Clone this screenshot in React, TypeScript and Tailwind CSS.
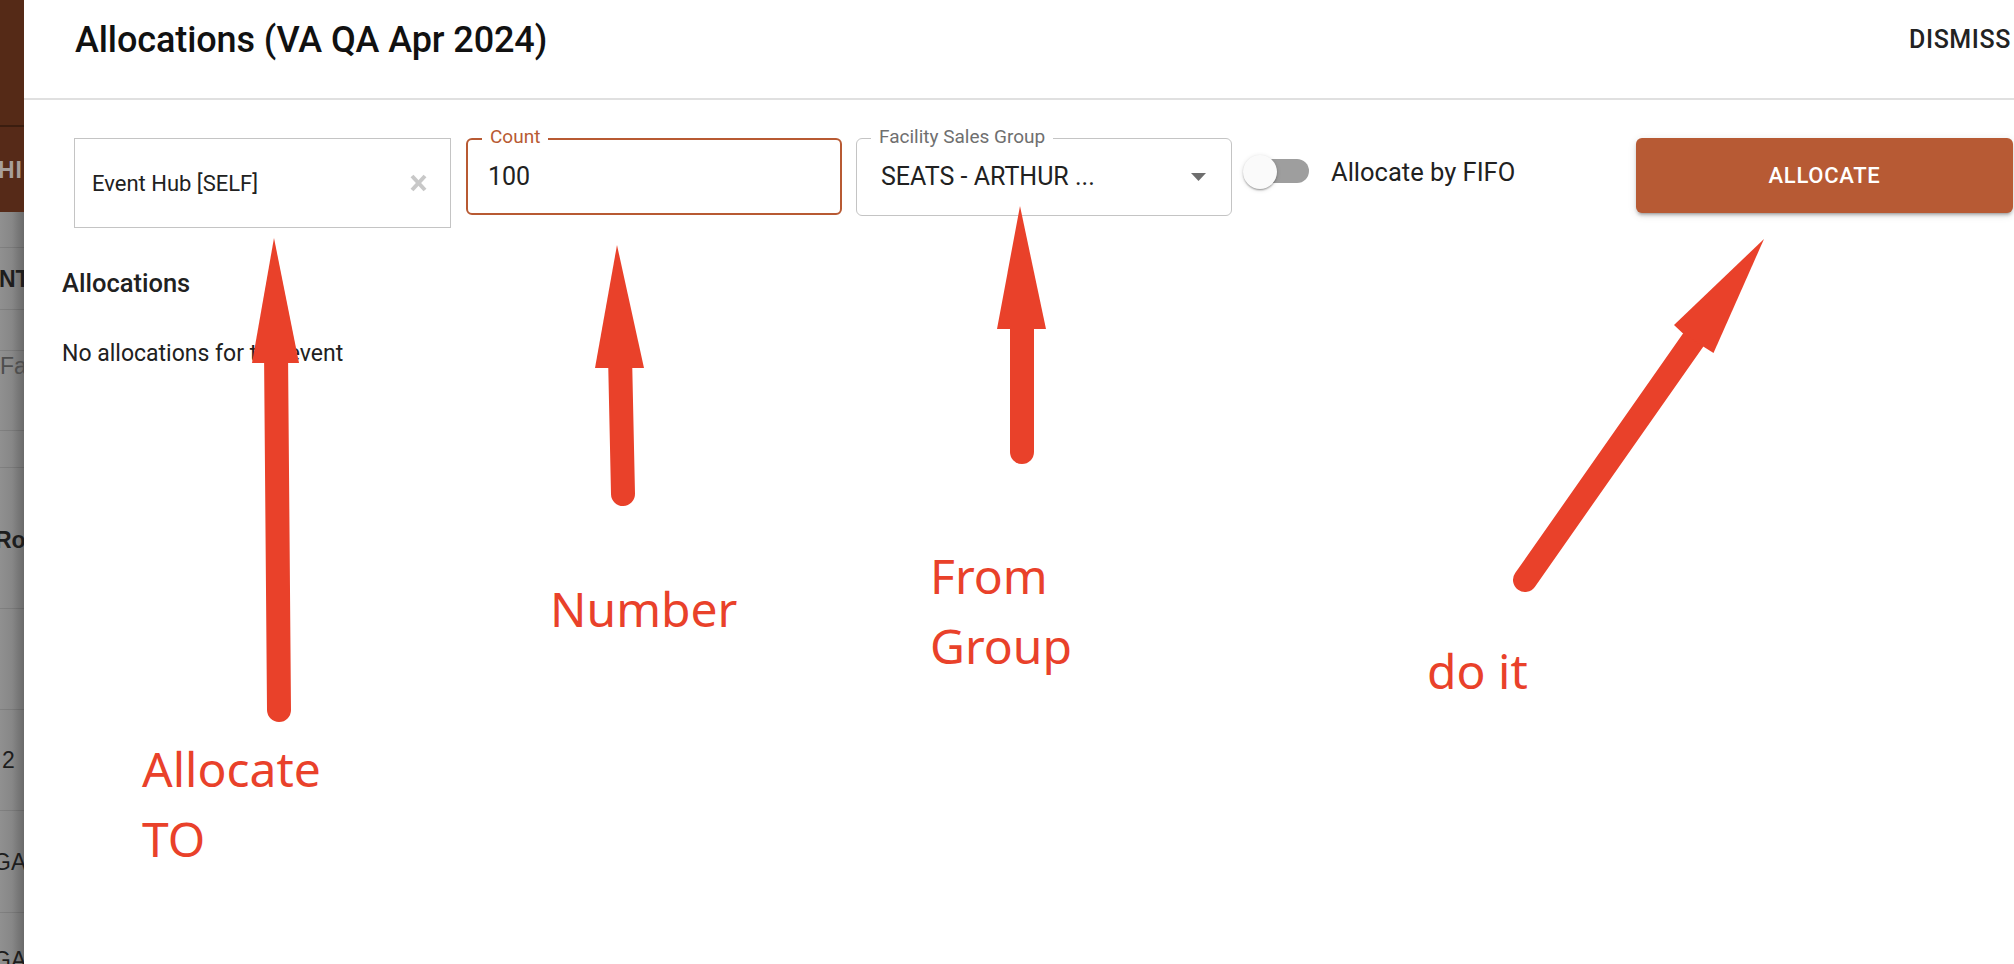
import React from "react";

function BgStrip() {
  const line = <div className="h-px shrink-0 bg-black/10" />;
  return (
    <div className="flex w-[24px] shrink-0 flex-col overflow-hidden font-['Liberation_Sans',sans-serif] text-[23px] leading-[26px]">
      <div className="h-[125px] shrink-0 bg-[#552a17]" />
      <div className="h-[2px] shrink-0 bg-[#3b1d0f]" />
      <div className="flex h-[85px] shrink-0 items-center bg-[#562a18] font-bold tracking-[1px] text-[#a79e99]">
        <span className="-ml-[2px] whitespace-nowrap">HI</span>
      </div>
      <div className="flex flex-1 flex-col bg-linear-to-r from-[#909090] via-[#878787] to-[#6a6a6a] text-[#1d1d1d]">
        <div className="h-[35px] shrink-0" />
        {line}
        <div className="flex h-[61px] shrink-0 items-center font-bold">
          <span className="-ml-[1px] whitespace-nowrap">NT</span>
        </div>
        {line}
        <div className="h-[40px] shrink-0" />
        {line}
        <div className="h-[79px] shrink-0 pt-[2px] text-[#4e4e4e]">
          <span className="whitespace-nowrap">Fa</span>
        </div>
        {line}
        <div className="h-[36px] shrink-0" />
        {line}
        <div className="flex h-[140px] shrink-0 items-center pt-[4px] font-bold">
          <span className="-ml-[5px] whitespace-nowrap">Row</span>
        </div>
        {line}
        <div className="h-[100px] shrink-0" />
        {line}
        <div className="flex h-[100px] shrink-0 items-center">
          <span className="ml-[2px] whitespace-nowrap">2</span>
        </div>
        {line}
        <div className="flex h-[101px] shrink-0 items-center">
          <span className="-ml-[7px] whitespace-nowrap">GA</span>
        </div>
        {line}
        <div className="flex-1 pt-[34px]">
          <span className="-ml-[7px] whitespace-nowrap">GA</span>
        </div>
      </div>
    </div>
  );
}

function Annotations() {
  const red = "#e9412a";
  return (
    <>
      <svg
        className="pointer-events-none absolute left-0 top-0"
        width={2014}
        height={964}
        viewBox="0 0 2014 964"
      >
        {/* Allocate TO */}
        <line x1={276} y1={350} x2={279} y2={710} stroke={red} strokeWidth={24} strokeLinecap="round" />
        <polygon points="274,238 299,363 252,363" fill={red} />
        {/* Number */}
        <line x1={620} y1={355} x2={623} y2={494} stroke={red} strokeWidth={24} strokeLinecap="round" />
        <polygon points="617,245 644,368 595,368" fill={red} />
        {/* From Group */}
        <line x1={1022} y1={315} x2={1022} y2={452} stroke={red} strokeWidth={24} strokeLinecap="round" />
        <polygon points="1020,206 1046,329 997,329" fill={red} />
        {/* do it */}
        <line x1={1525} y1={580} x2={1696} y2={336} stroke={red} strokeWidth={24} strokeLinecap="round" />
        <polygon points="1764,239 1713.5,353 1704,347 1682.5,333 1674,325" fill={red} />
      </svg>
      <div className="pointer-events-none absolute left-[142px] top-[734px] font-['Noto_Sans',sans-serif] text-[48px] leading-[70px] text-[#e9412a]">
        <div>Allocate</div>
        <div>TO</div>
      </div>
      <div className="pointer-events-none absolute left-[550px] top-[574px] font-['Noto_Sans',sans-serif] text-[48px] leading-[70px] text-[#e9412a]">
        Number
      </div>
      <div className="pointer-events-none absolute left-[930px] top-[541px] font-['Noto_Sans',sans-serif] text-[48px] leading-[70px] text-[#e9412a]">
        <div>From</div>
        <div>Group</div>
      </div>
      <div className="pointer-events-none absolute left-[1427px] top-[636px] font-['Noto_Sans',sans-serif] text-[48px] leading-[70px] text-[#e9412a]">
        do it
      </div>
    </>
  );
}

export default function App() {
  return (
    <div className="relative flex h-[964px] w-[2014px] overflow-hidden bg-white font-['Roboto',sans-serif]">
      <BgStrip />
      <div className="flex min-w-0 flex-1 flex-col bg-white">
        {/* header */}
        <div className="flex h-[98px] shrink-0 items-start pl-[51px] pr-[3px] pt-[19px]">
          <div className="text-[36px] font-medium leading-[42px] tracking-[-0.1px] text-[#111111]">
            Allocations (VA QA Apr 2024)
          </div>
          <div className="ml-auto mt-[6px] shrink-0 text-[25px] font-medium leading-[29px] tracking-[0.6px] text-[#222222]">
            DISMISS
          </div>
        </div>
        <div className="h-[2px] shrink-0 bg-[#e0e0e0]" />

        {/* body */}
        <div className="flex flex-col pl-[38px] pt-[38px]">
          <div className="ml-[12px] mr-[1px] flex items-start">
            {/* Allocate to */}
            <div className="flex h-[90px] w-[377px] shrink-0 items-center justify-between border border-[#c4c4c4] pl-[17px] pr-[23px] text-[22px] text-[#212121]">
              <span>Event Hub [SELF]</span>
              <svg width={17} height={18} viewBox="0 0 17 18">
                <line x1={2} y1={2} x2={15} y2={16} stroke="#c8c8c8" strokeWidth={4} />
                <line x1={15} y1={2} x2={2} y2={16} stroke="#c8c8c8" strokeWidth={4} />
              </svg>
            </div>

            {/* Count */}
            <div className="relative ml-[15px] flex h-[77px] w-[376px] shrink-0 items-center rounded-[6px] border-2 border-[#b85a33] pl-[20px] text-[25px] text-[#212121]">
              <span className="absolute left-[14px] top-[-14px] bg-white px-[8px] text-[19px] leading-[22px] text-[#b85a33]">
                Count
              </span>
              <span>100</span>
            </div>

            {/* Facility Sales Group */}
            <div className="relative ml-[14px] flex h-[78px] w-[376px] shrink-0 items-center justify-between rounded-[6px] border border-[#c4c4c4] pl-[24px] pr-[25px] text-[25px] text-[#212121]">
              <span className="absolute left-[14px] top-[-13px] bg-white px-[8px] text-[19px] leading-[22px] text-[#6f6f6f]">
                Facility Sales Group
              </span>
              <span>SEATS - ARTHUR ...</span>
              <svg width={15} height={8} viewBox="0 0 15 8">
                <polygon points="0,0 15,0 7.5,8" fill="#6e6e6e" />
              </svg>
            </div>

            {/* switch */}
            <div className="relative ml-[10px] mt-[16px] h-[36px] w-[67px] shrink-0">
              <div className="absolute left-[14px] top-[5px] h-[24px] w-[53px] rounded-full bg-[#9e9e9e]" />
              <div className="absolute left-[1px] top-[1px] h-[34px] w-[34px] rounded-full bg-[#fafafa] shadow-[0_2px_2px_-1px_rgba(0,0,0,0.25),0_1px_2px_0_rgba(0,0,0,0.16),0_1px_5px_0_rgba(0,0,0,0.12)]" />
            </div>
            <div className="ml-[22px] mt-[19px] shrink-0 whitespace-nowrap text-[25.5px] leading-[30px] text-[#212121]">
              Allocate by FIFO
            </div>

            {/* allocate button */}
            <button className="ml-auto flex h-[75px] w-[377px] shrink-0 items-center justify-center rounded-[6px] bg-[#b75a34] text-[22px] font-medium tracking-[0.7px] text-white shadow-[0_4px_2px_-3px_rgba(0,0,0,0.2),0_3px_3px_0_rgba(0,0,0,0.14),0_2px_8px_0_rgba(0,0,0,0.12)]">
              ALLOCATE
            </button>
          </div>

          <div className="mt-[40px] text-[25.5px] font-medium leading-[30px] text-[#212121]">
            Allocations
          </div>
          <div className="mt-[41px] text-[23px] leading-[30px] text-[#212121]">
            No allocations for the event
          </div>
        </div>
      </div>
      <Annotations />
    </div>
  );
}
